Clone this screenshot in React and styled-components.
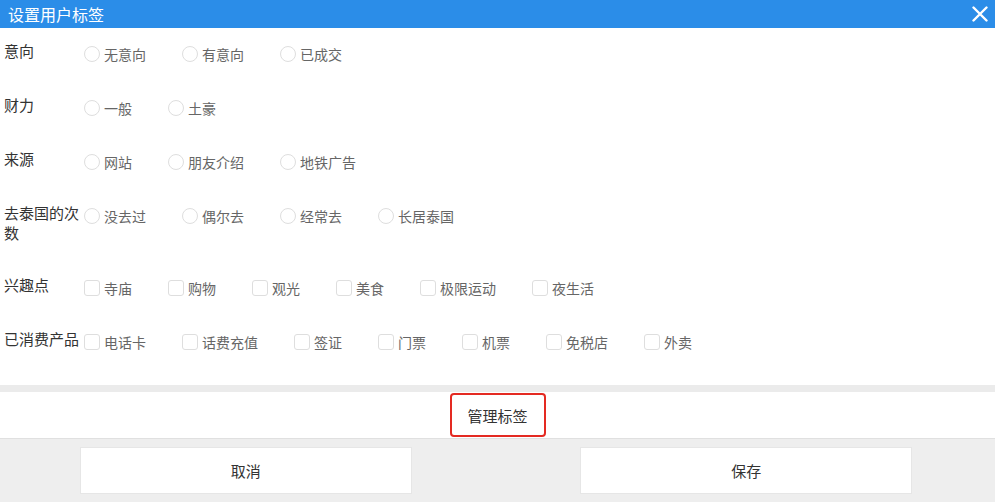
import React from "react";
import styled, { createGlobalStyle } from "styled-components";

const GlobalStyle = createGlobalStyle`
  html, body { margin: 0; padding: 0; background: #fff; }
  body {
    font-family: "Noto Sans CJK SC", "Noto Sans", sans-serif;
    color: #333;
  }
`;

const Dialog = styled.div`
  width: 995px;
  height: 502px;
  display: flex;
  flex-direction: column;
  overflow: hidden;
`;

const Header = styled.div`
  height: 28px;
  background: #2b8de8;
  display: flex;
  align-items: center;
  justify-content: space-between;
  padding: 0 7px 0 8px;
  flex-shrink: 0;
`;

const Title = styled.span`
  color: #fff;
  font-size: 16px;
  line-height: 28px;
`;

const CloseBtn = styled.button`
  border: 0;
  background: none;
  padding: 0;
  width: 16px;
  height: 16px;
  display: flex;
  cursor: pointer;
`;

const Body = styled.div`
  padding: 13px 0 34px 4px;
  display: flex;
  flex-direction: column;
  gap: 32px;
`;

const Row = styled.div`
  display: flex;
  align-items: flex-start;
`;

const Label = styled.div`
  width: 80px;
  flex-shrink: 0;
  font-size: 15px;
  line-height: 20px;
  color: #333;
`;

const Options = styled.div`
  display: flex;
  padding-top: 3px;
`;

const Option = styled.label`
  display: flex;
  align-items: center;
  height: 19px;
  margin-right: 36px;
  font-size: 14px;
  color: #666;
  cursor: pointer;
`;

const Mark = styled.span`
  width: 16px;
  height: 16px;
  box-sizing: border-box;
  border: 1px solid #dedede;
  border-radius: ${(p) => (p.$round ? "50%" : "3px")};
  background: #fff;
  margin-right: 4px;
  flex-shrink: 0;
`;

const Band = styled.div`
  height: 7px;
  background: #ebebeb;
`;

const ManageRow = styled.div`
  height: 47px;
  display: flex;
  justify-content: center;
  padding-top: 1px;
  box-sizing: border-box;
  border-bottom: 1px solid #e0e0e0;
  background: #fff;
`;

const ManageBtn = styled.button`
  width: 96px;
  height: 44px;
  box-sizing: border-box;
  border: 2px solid #e42a22;
  border-radius: 4px;
  background: #fff;
  font-family: inherit;
  font-size: 15px;
  color: #333;
  cursor: pointer;
`;

const Footer = styled.div`
  flex: 1;
  background: #eeeeee;
  display: grid;
  grid-template-columns: 1fr 1fr;
  align-items: start;
  padding-top: 8px;
`;

const FooterBtn = styled.button`
  width: 332px;
  height: 47px;
  justify-self: center;
  margin-left: ${(p) => p.$offset || 0}px;
  border: 1px solid #e6e6e6;
  background: #fff;
  font-family: inherit;
  font-size: 15px;
  color: #333;
  cursor: pointer;
`;

const groups = [
  { label: "意向", type: "radio", items: ["无意向", "有意向", "已成交"] },
  { label: "财力", type: "radio", items: ["一般", "土豪"] },
  { label: "来源", type: "radio", items: ["网站", "朋友介绍", "地铁广告"] },
  { label: "去泰国的次数", type: "radio", items: ["没去过", "偶尔去", "经常去", "长居泰国"] },
  { label: "兴趣点", type: "check", items: ["寺庙", "购物", "观光", "美食", "极限运动", "夜生活"] },
  { label: "已消费产品", type: "check", items: ["电话卡", "话费充值", "签证", "门票", "机票", "免税店", "外卖"] },
];

const CloseIcon = () => (
  <svg width="16" height="16" viewBox="0 0 16 16">
    <path d="M1.5 1.5 L14.5 14.5 M14.5 1.5 L1.5 14.5" stroke="#fff" strokeWidth="2.4" strokeLinecap="round" />
  </svg>
);

export default function App() {
  return (
    <>
      <GlobalStyle />
      <Dialog>
        <Header>
          <Title>设置用户标签</Title>
          <CloseBtn aria-label="close"><CloseIcon /></CloseBtn>
        </Header>
        <Body>
          {groups.map((g) => (
            <Row key={g.label}>
              <Label>{g.label}</Label>
              <Options>
                {g.items.map((it) => (
                  <Option key={it}>
                    <Mark $round={g.type === "radio"} />
                    {it}
                  </Option>
                ))}
              </Options>
            </Row>
          ))}
        </Body>
        <Band />
        <ManageRow>
          <ManageBtn>管理标签</ManageBtn>
        </ManageRow>
        <Footer>
          <FooterBtn $offset={-6}>取消</FooterBtn>
          <FooterBtn>保存</FooterBtn>
        </Footer>
      </Dialog>
    </>
  );
}
